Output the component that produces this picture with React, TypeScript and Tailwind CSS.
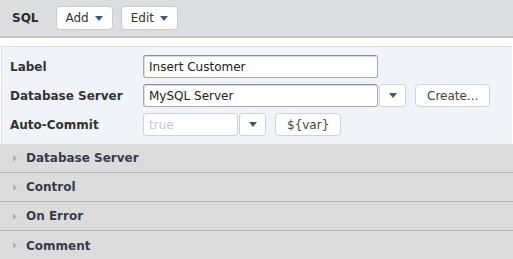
import React from 'react';

const font = { fontFamily: '"DejaVu Sans", Verdana, sans-serif' };

function Caret() {
  return (
    <svg width="8" height="5" viewBox="0 0 8 5" className="fill-[#3d5a73]">
      <path d="M0 0h8L4 5z" />
    </svg>
  );
}

function ToolButton({ label }: { label: string }) {
  return (
    <button className="flex h-[24px] items-center gap-[6px] rounded-[4px] border border-[#c9cbcf] bg-white px-[9px] text-[12px] text-[#333]">
      {label}
      <Caret />
    </button>
  );
}

function DropButton() {
  return (
    <button className="flex h-[23px] w-[27px] items-center justify-center rounded-[3px] border border-[#cfd2d6] bg-white">
      <Caret />
    </button>
  );
}

const sections = ['Database Server', 'Control', 'On Error', 'Comment'];

const textInput =
  'h-[23px] w-[235px] rounded-[3px] border border-[#a9a9a9] border-t-[#8f8f8f] bg-white px-[5px] text-[12px] text-[#222] shadow-[inset_1px_1px_1px_rgba(0,0,0,0.15)] outline-none';

export default function App() {
  return (
    <div className="h-[259px] w-[513px] overflow-hidden bg-white" style={font}>
      <div className="flex h-[38px] items-center border-b-2 border-[#c4c5c7] bg-[#dcdddf] pl-[12px]">
        <span className="mr-[17px] text-[12px] font-bold text-[#2a2a2a]">SQL</span>
        <div className="flex gap-[8px]">
          <ToolButton label="Add" />
          <ToolButton label="Edit" />
        </div>
      </div>

      <div className="mx-[1px] mt-[8px] border-t border-l border-[#dde1e6] bg-[#f0f4f9] pb-[8px] pl-[8px] pt-[8px]">
        <div className="grid grid-cols-[133px_1fr] items-center gap-y-[6px] text-[12px]">
          <span className="font-bold text-[#333]">Label</span>
          <div className="flex">
            <input readOnly value="Insert Customer" className={textInput} />
          </div>

          <span className="font-bold text-[#333]">Database Server</span>
          <div className="flex items-center">
            <input readOnly value="MySQL Server" className={textInput} />
            <div className="ml-[1px]">
              <DropButton />
            </div>
            <button className="ml-[9px] h-[23px] rounded-[4px] border border-[#cfd2d6] bg-white px-[11px] text-[12px] text-[#444]">
              Create...
            </button>
          </div>

          <span className="font-bold text-[#333]">Auto-Commit</span>
          <div className="flex items-center">
            <input
              readOnly
              placeholder="true"
              className="h-[23px] w-[95px] rounded-[3px] border border-[#cfd2d6] bg-white px-[5px] text-[12px] placeholder:text-[#c8c8c8] outline-none"
            />
            <div className="ml-[1px]">
              <DropButton />
            </div>
            <button className="ml-[9px] h-[23px] rounded-[4px] border border-[#cfd2d6] bg-white px-[11px] text-[12px] text-[#444]">
              {'${var}'}
            </button>
          </div>
        </div>
      </div>

      <div className="bg-[#dcdcdc]">
        {sections.map((s, i) => (
          <div
            key={s}
            className={
              'flex h-[29px] items-center gap-[9px] pl-[13px] ' +
              (i < sections.length - 1 ? 'border-b border-[#b5b5b5]' : '')
            }
          >
            <svg width="4" height="7" viewBox="0 0 4 7" className="fill-[#b3b3b3]">
              <path d="M0 0l4 3.5L0 7z" />
            </svg>
            <span className="text-[12px] font-bold text-[#3a3a4e]">{s}</span>
          </div>
        ))}
      </div>
    </div>
  );
}
